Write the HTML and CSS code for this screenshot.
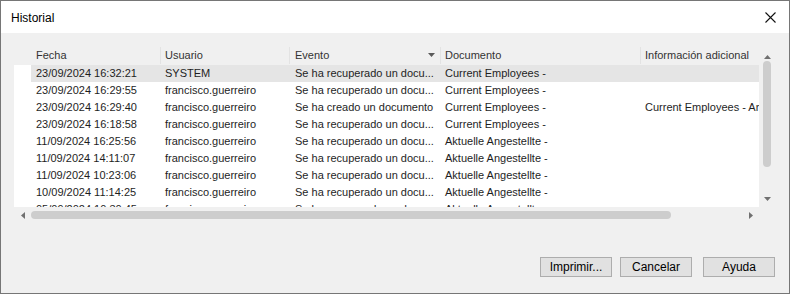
FILE: index.html
```html
<!DOCTYPE html>
<html>
<head>
    <link rel="stylesheet" href="styles.css">
</head>
<body>
    <div class="window">
        <div class="titlebar">
            <span class="title">Historial</span>
            <svg class="close" width="11" height="11" viewBox="0 0 11 11">
                <path d="M0.5 0.5 L10.5 10.5 M10.5 0.5 L0.5 10.5" stroke="#111" stroke-width="1.1" fill="none"/>
            </svg>
        </div>

        <div class="content">
            <div class="listview">
                <div class="list-main">
                    <div class="header">
                        <div class="hcell c1">Fecha</div>
                        <div class="hcell c2">Usuario</div>
                        <div class="hcell c3">Evento
                            <svg class="sort" width="7" height="4" viewBox="0 0 7 4"><path d="M0 0 H7 L3.5 4 Z" fill="#5a5a5a"/></svg>
                        </div>
                        <div class="hcell c4">Documento</div>
                        <div class="hcell c5">Información adicional</div>
                    </div>
                    <div class="rows">
                        <div class="row selected">
                            <div class="cell c1">23/09/2024 16:32:21</div>
                            <div class="cell c2">SYSTEM</div>
                            <div class="cell c3">Se ha recuperado un docu...</div>
                            <div class="cell c4">Current Employees -</div>
                            <div class="cell c5"></div>
                        </div>
                        <div class="row">
                            <div class="cell c1">23/09/2024 16:29:55</div>
                            <div class="cell c2">francisco.guerreiro</div>
                            <div class="cell c3">Se ha recuperado un docu...</div>
                            <div class="cell c4">Current Employees -</div>
                            <div class="cell c5"></div>
                        </div>
                        <div class="row">
                            <div class="cell c1">23/09/2024 16:29:40</div>
                            <div class="cell c2">francisco.guerreiro</div>
                            <div class="cell c3">Se ha creado un documento</div>
                            <div class="cell c4">Current Employees -</div>
                            <div class="cell c5">Current Employees - Annual</div>
                        </div>
                        <div class="row">
                            <div class="cell c1">23/09/2024 16:18:58</div>
                            <div class="cell c2">francisco.guerreiro</div>
                            <div class="cell c3">Se ha recuperado un docu...</div>
                            <div class="cell c4">Current Employees -</div>
                            <div class="cell c5"></div>
                        </div>
                        <div class="row">
                            <div class="cell c1">11/09/2024 16:25:56</div>
                            <div class="cell c2">francisco.guerreiro</div>
                            <div class="cell c3">Se ha recuperado un docu...</div>
                            <div class="cell c4">Aktuelle Angestellte -</div>
                            <div class="cell c5"></div>
                        </div>
                        <div class="row">
                            <div class="cell c1">11/09/2024 14:11:07</div>
                            <div class="cell c2">francisco.guerreiro</div>
                            <div class="cell c3">Se ha recuperado un docu...</div>
                            <div class="cell c4">Aktuelle Angestellte -</div>
                            <div class="cell c5"></div>
                        </div>
                        <div class="row">
                            <div class="cell c1">11/09/2024 10:23:06</div>
                            <div class="cell c2">francisco.guerreiro</div>
                            <div class="cell c3">Se ha recuperado un docu...</div>
                            <div class="cell c4">Aktuelle Angestellte -</div>
                            <div class="cell c5"></div>
                        </div>
                        <div class="row">
                            <div class="cell c1">10/09/2024 11:14:25</div>
                            <div class="cell c2">francisco.guerreiro</div>
                            <div class="cell c3">Se ha recuperado un docu...</div>
                            <div class="cell c4">Aktuelle Angestellte -</div>
                            <div class="cell c5"></div>
                        </div>
                        <div class="row">
                            <div class="cell c1">05/09/2024 10:30:45</div>
                            <div class="cell c2">francisco.guerreiro</div>
                            <div class="cell c3">Se ha recuperado un docu...</div>
                            <div class="cell c4">Aktuelle Angestellte -</div>
                            <div class="cell c5"></div>
                        </div>
                    </div>
                </div>

                <div class="vscroll">
                    <div class="sbtn">
                        <svg width="7" height="4" viewBox="0 0 7 4"><path d="M0 4 H7 L3.5 0 Z" fill="#707070"/></svg>
                    </div>
                    <div class="vthumb"></div>
                    <div class="track"></div>
                    <div class="sbtn">
                        <svg width="7" height="4" viewBox="0 0 7 4"><path d="M0 0 H7 L3.5 4 Z" fill="#707070"/></svg>
                    </div>
                </div>

                <div class="hscroll">
                    <div class="sbtn">
                        <svg width="4" height="7" viewBox="0 0 4 7"><path d="M4 0 V7 L0 3.5 Z" fill="#707070"/></svg>
                    </div>
                    <div class="hthumb"></div>
                    <div class="track"></div>
                    <div class="sbtn">
                        <svg width="4" height="7" viewBox="0 0 4 7"><path d="M0 0 V7 L4 3.5 Z" fill="#707070"/></svg>
                    </div>
                </div>
                <div class="corner"></div>
            </div>

            <div class="buttons">
                <button>Imprimir...</button>
                <button>Cancelar</button>
                <button class="help">Ayuda</button>
            </div>
        </div>
    </div>
</body>
</html>
```

FILE: styles.css
```css
body {
    margin: 0;
    font-family: "Liberation Sans", Arial, sans-serif;
    background: #ffffff;
}
.window {
    width: 790px;
    height: 294px;
    box-sizing: border-box;
    border: 1px solid #767676;
    background: #f0f0f0;
    display: flex;
    flex-direction: column;
}
.titlebar {
    height: 32px;
    background: #ffffff;
    display: flex;
    align-items: center;
    justify-content: space-between;
    padding: 0 13px 0 10px;
}
.title {
    font-size: 12px;
    color: #000;
    padding-top: 1px;
}
.close {
    margin-top: 0;
}
.content {
    flex: 1;
    padding: 11px 13px 0 13px;
}

/* list view */
.listview {
    display: grid;
    grid-template-columns: 745px 16px;
    grid-template-rows: 163px 16px;
}
.list-main {
    overflow: hidden;
    display: flex;
    flex-direction: column;
}
.header {
    display: flex;
    height: 21px;
    padding-left: 17px;
    padding-top: 3px;
    box-sizing: border-box;
    flex-shrink: 0;
}
.hcell {
    flex-shrink: 0;
    height: 17px;
    line-height: 17px;
    font-size: 11px;
    color: #333;
    border-right: 1px solid #e3e3e3;
    box-sizing: border-box;
    white-space: nowrap;
    display: flex;
    align-items: center;
}
.sort {
    margin-left: auto;
    margin-right: 5px;
    margin-bottom: 2px;
}
.rows {
    flex: 1;
    background: #ffffff;
    overflow: hidden;
}
.row {
    display: flex;
    height: 17px;
    margin-left: 17px;
}
.row.selected {
    background: #e5e5e5;
}
.cell {
    flex-shrink: 0;
    line-height: 17px;
    font-size: 11px;
    color: #1e1e1e;
    white-space: nowrap;
    overflow: hidden;
    box-sizing: border-box;
}
.c1 { width: 130px; padding-left: 5px; }
.c2 { width: 129px; padding-left: 4px; }
.c3 { width: 151px; padding-left: 5px; }
.c4 { width: 200px; padding-left: 4px; }
.c5 { width: 200px; padding-left: 4px; border-right: none; }
.row .c5 { overflow: visible; }

/* scrollbars */
.vscroll {
    display: flex;
    flex-direction: column;
    align-items: center;
}
.hscroll {
    display: flex;
    align-items: center;
}
.sbtn {
    width: 17px;
    height: 17px;
    display: flex;
    align-items: center;
    justify-content: center;
    flex-shrink: 0;
}
.vscroll .sbtn {
    width: 16px;
}
.vscroll .sbtn:first-child {
    height: 15px;
    align-items: flex-end;
}
.vthumb {
    width: 8px;
    height: 106px;
    margin-top: 2px;
    background: #cdcdcd;
    border-radius: 4px;
}
.hthumb {
    width: 640px;
    height: 8px;
    background: #cdcdcd;
    border-radius: 4px;
}
.track {
    flex: 1;
}

/* dialog buttons */
.buttons {
    display: flex;
    justify-content: flex-end;
    gap: 8px;
    margin-top: 34px;
    margin-right: 1px;
}
button {
    width: 72px;
    height: 20px;
    background: #e1e1e1;
    border: 1px solid #adadad;
    font-family: "Liberation Sans", Arial, sans-serif;
    font-size: 12px;
    color: #000;
    padding: 0;
}
button.help {
    margin-left: 3px;
}
```
